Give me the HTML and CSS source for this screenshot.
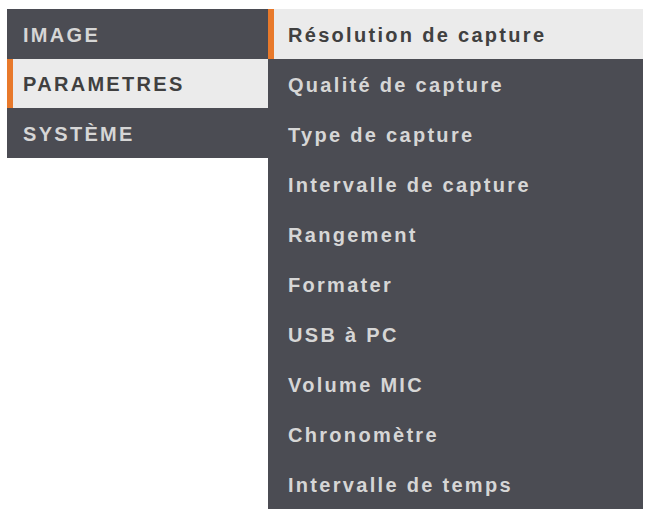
FILE: index.html
```html
<!DOCTYPE html>
<html lang="fr">
<head>
<meta charset="utf-8">
<link rel="stylesheet" href="styles.css">
</head>
<body>
<div class="screen">
  <ul class="menu main">
    <li class="item">IMAGE</li>
    <li class="item active">PARAMETRES</li>
    <li class="item">SYSTÈME</li>
  </ul>
  <ul class="menu sub">
    <li class="item active">Résolution de capture</li>
    <li class="item">Qualité de capture</li>
    <li class="item">Type de capture</li>
    <li class="item">Intervalle de capture</li>
    <li class="item">Rangement</li>
    <li class="item">Formater</li>
    <li class="item">USB à PC</li>
    <li class="item">Volume MIC</li>
    <li class="item">Chronomètre</li>
    <li class="item">Intervalle de temps</li>
  </ul>
</div>
</body>
</html>
```
FILE: styles.css
```css
html, body {
  margin: 0;
  padding: 0;
  background: #ffffff;
}
.screen {
  display: flex;
  align-items: flex-start;
  padding: 9px 0 0 7px;
  font-family: "Liberation Sans", Arial, sans-serif;
  font-weight: bold;
  font-size: 20px;
  letter-spacing: 2.3px;
}
.menu {
  list-style: none;
  margin: 0;
  padding: 0;
  background: #4b4c53;
}
.main {
  width: 261px;
}
.sub {
  width: 375px;
}
.item {
  height: 50px;
  display: flex;
  align-items: center;
  padding-top: 3px;
  color: #d6d6d6;
  box-sizing: border-box;
  border-left: 6px solid transparent;
}
.main .item {
  padding-left: 10px;
  height: 49.5px;
}
.sub .item {
  padding-left: 14px;
}
.item.active {
  background: #ebebeb;
  color: #404040;
  border-left-color: #e8792b;
}
```
